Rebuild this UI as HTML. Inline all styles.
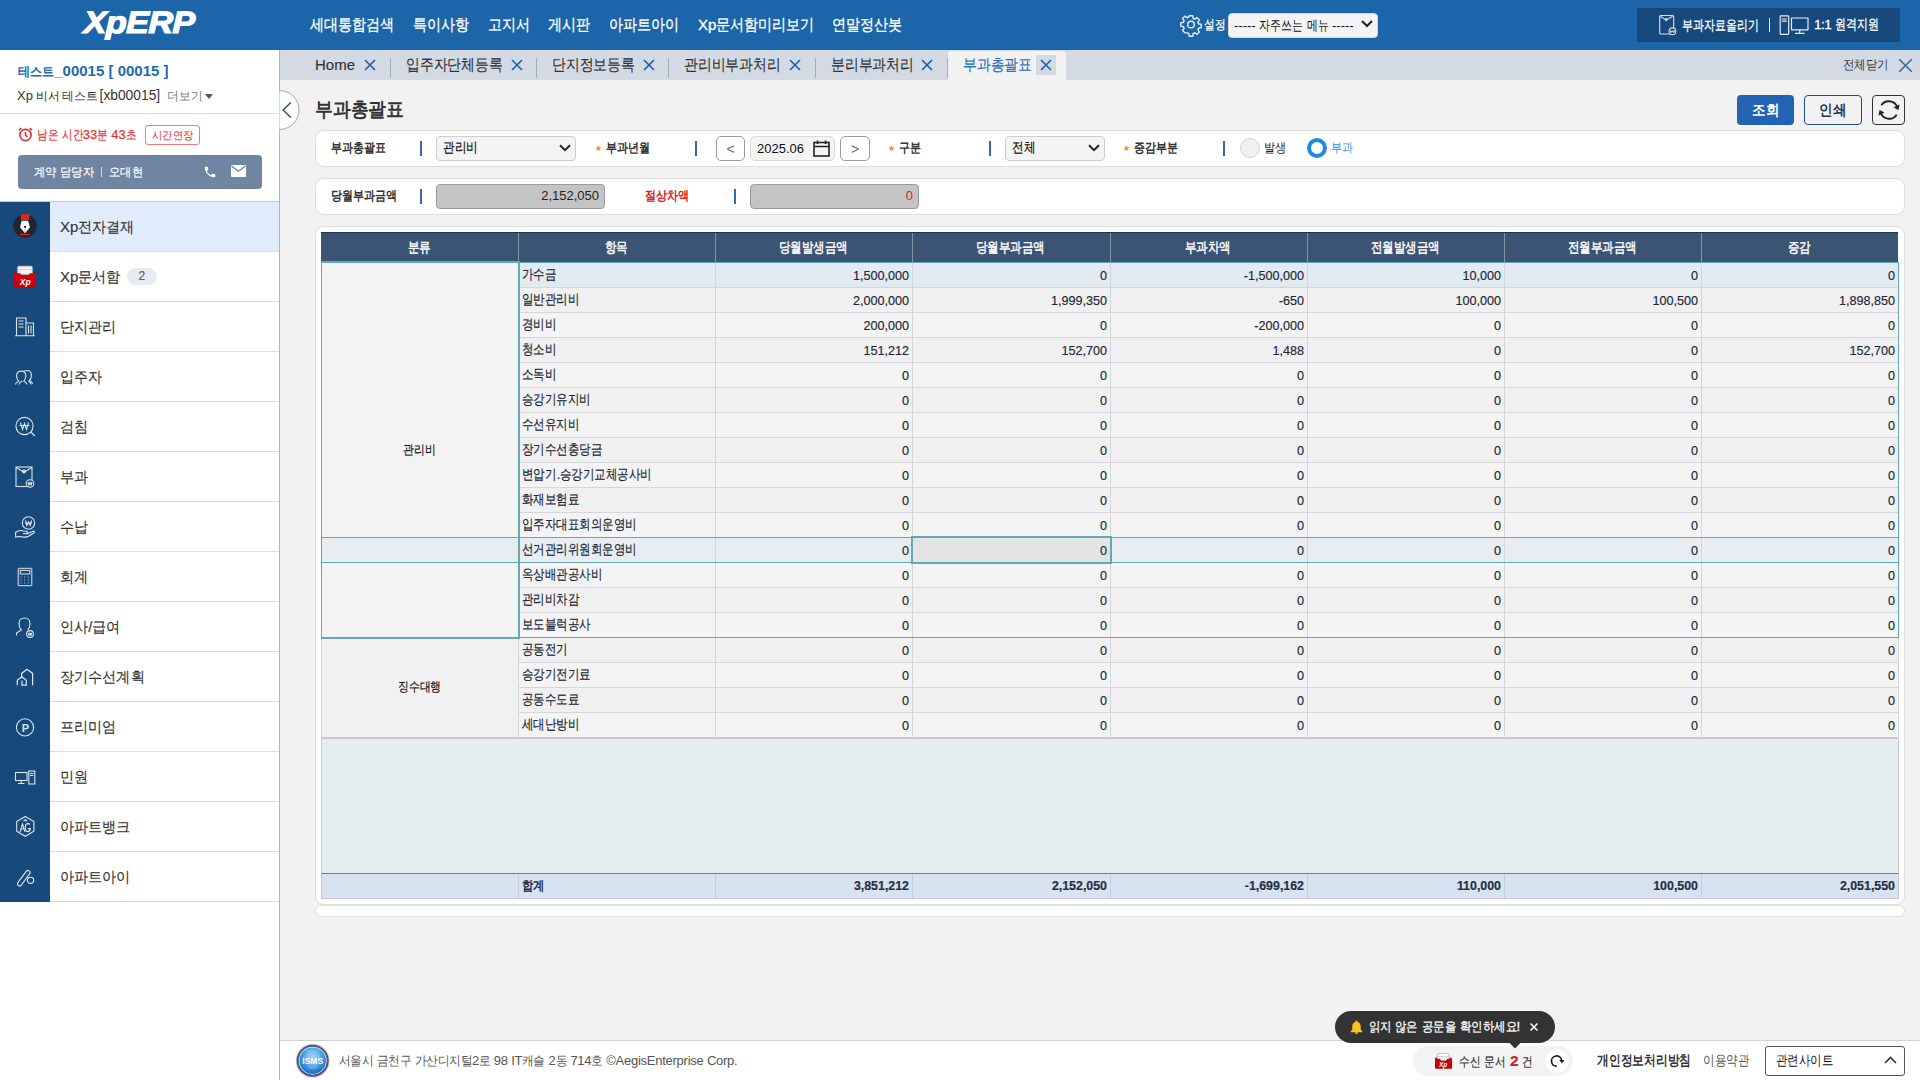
<!DOCTYPE html><html><head><meta charset="utf-8"><title>XpERP</title><style>
*{box-sizing:border-box;margin:0;padding:0}
html,body{width:1920px;height:1080px;overflow:hidden}
body{font-family:"Liberation Sans",sans-serif;background:#f2f2f2;position:relative;color:#333}
i{font-style:normal}
i.k{display:inline-block;font-size:calc(var(--kf,1) * 1em);transform:scaleX(var(--s,0.88));transform-origin:0 0;margin-right:calc(var(--n) * (var(--s,0.88) - 1) * 1em)}
.a{position:absolute;white-space:nowrap}
svg{position:absolute;overflow:visible}
#hdr{position:absolute;left:0;top:0;width:1920px;height:50px;background:#1d65a9}
.nav{position:absolute;top:15px;font-size:15px;color:#fff;-webkit-text-stroke:0.3px #fff;white-space:nowrap;line-height:20px;--kf:1.044;--s:0.878}
#side{position:absolute;left:0;top:50px;width:280px;height:1030px;background:#fff;border-right:1px solid #b4b4b4}
#tabs{position:absolute;left:280px;top:50px;width:1640px;height:30px;background:#d3dae3}
.tab{position:absolute;top:55px;height:20px;line-height:20px;font-size:15px;color:#333;-webkit-text-stroke:0.15px currentColor;white-space:nowrap;--kf:1.05;--s:0.864}
.tsep{position:absolute;top:58px;width:1px;height:20px;background:#a7adb5}
.panel{position:absolute;background:#fff;border:1px solid #dedede;border-radius:9px}
.lbl{position:absolute;font-size:13px;font-weight:bold;color:#333;white-space:nowrap;line-height:16px;--kf:1.026;--s:0.847}
.bsep{position:absolute;width:2px;height:15px;background:#2b6cb3}
.star{position:absolute;color:#f0862a;font-size:13px;font-weight:bold;line-height:16px}
.sel{position:absolute;background:#f4f4f4;border:1px solid #cdcdcd;border-radius:4px;font-size:13px;color:#111;-webkit-text-stroke:0.2px #111;line-height:22px;padding-left:6px;--kf:1.04;--s:0.83}
.ro{position:absolute;background:#c4c4c4;border:1px solid #9a9a9a;border-radius:4px;font-size:13px;color:#222;text-align:right;line-height:22px;padding-right:5px}
.mi{position:absolute;left:50px;width:229px;height:50px;border-bottom:1px solid #dcdcdc;font-size:15px;line-height:49px;padding-left:10px;color:#333;-webkit-text-stroke:0.15px #333;--kf:1.02;--s:0.94}
.row{position:absolute;left:321px;width:1577px;height:25px;border-bottom:1px solid #d4d6db}
.vl{position:absolute;width:1px;background:#d4d6db}
.c{position:absolute;font-size:12.6px;line-height:25px;padding-top:2px;color:#1c2636;-webkit-text-stroke:0.15px #1c2636;white-space:nowrap}
.it{position:absolute;left:522px;font-size:13px;line-height:25px;color:#1c2636;-webkit-text-stroke:0.2px #1c2636;white-space:nowrap;--kf:1.05;--s:0.82}
.th{position:absolute;top:233px;height:30px;line-height:30px;font-size:13px;color:#fff;-webkit-text-stroke:0.45px #fff;text-align:center;--kf:1.04;--s:0.82}
</style></head><body>
<div id="hdr"></div>
<div class="a" style="left:84px;top:5px;font:italic bold 31px/36px 'Liberation Sans',sans-serif;color:#fff;letter-spacing:-0.5px;-webkit-text-stroke:1.2px #fff;transform-origin:0 0;transform:scaleX(1.1) skewX(-1deg)">XpERP</div>
<div class="nav" style="left:310px"><i class="k" style="--n:6">세대통합검색</i></div>
<div class="nav" style="left:413px"><i class="k" style="--n:4">특이사항</i></div>
<div class="nav" style="left:488px"><i class="k" style="--n:3">고지서</i></div>
<div class="nav" style="left:548px"><i class="k" style="--n:3">게시판</i></div>
<div class="nav" style="left:609px"><i class="k" style="--n:5">아파트아이</i></div>
<div class="nav" style="left:698px">Xp<i class="k" style="--n:7">문서함미리보기</i></div>
<div class="nav" style="left:832px"><i class="k" style="--n:5">연말정산봇</i></div>
<svg style="left:1180px;top:14px" width="22" height="22" viewBox="0 0 22 22"><g fill="none" stroke="#e6edf5" stroke-width="1.4"><path d="M9.3 1.8h3.4l.5 2.6 1.6.7 2.2-1.5 2.4 2.4-1.5 2.2.7 1.6 2.6.5v3.4l-2.6.5-.7 1.6 1.5 2.2-2.4 2.4-2.2-1.5-1.6.7-.5 2.6H9.3l-.5-2.6-1.6-.7L5 18.9l-2.4-2.4 1.5-2.2-.7-1.6L.8 12.2V8.8l2.6-.5.7-1.6L2.6 4.5 5 2.1l2.2 1.5 1.6-.7z"/><circle cx="11" cy="10.5" r="3.3"/></g></svg>
<div class="a" style="left:1204px;top:15px;font-size:13.5px;color:#fff;line-height:20px;-webkit-text-stroke:0.3px #fff;--kf:0.99;--s:0.82"><i class="k" style="--n:2">설정</i></div>
<div class="a" style="left:1228px;top:13px;width:150px;height:25px;background:#f4f4f4;border-radius:4px;border:1px solid #d8d8d8"></div>
<div class="a" style="left:1234px;top:15px;font-size:13px;color:#111;line-height:20px;--kf:1.08;--s:0.78">----- <i class="k" style="--n:4">자주쓰는</i> <i class="k" style="--n:2">메뉴</i> -----</div>
<svg style="left:1361px;top:20px" width="12" height="8" viewBox="0 0 12 8"><path d="M1 1l5 5 5-5" fill="none" stroke="#222" stroke-width="2"/></svg>
<div class="a" style="left:1637px;top:8px;width:263px;height:34px;background:#17497c"></div>
<svg style="left:1659px;top:14px" width="20" height="22" viewBox="0 0 20 22"><g fill="none" stroke="#d5dee8" stroke-width="1.1"><rect x="0.7" y="1.5" width="14" height="18.5" rx="1"/><path d="M1.2 2.2l4.8 3.2 1.2-.9 1.2.9 5.2-3.2M6 5.4l1.2 1.3 1.2-1.3"/><circle cx="13.4" cy="17.3" r="3.4" fill="#17497c"/><path d="M11.2 16.2l.9 2.5 1.3-1.9 1.3 1.9.9-2.5M11 17.3h4.8" stroke-width="0.9"/></g></svg>
<div class="a" style="left:1682px;top:15px;font-size:13.5px;color:#fff;line-height:20px;-webkit-text-stroke:0.3px #fff;--kf:1.05;--s:0.78"><i class="k" style="--n:7">부과자료올리기</i></div>
<div class="a" style="left:1769px;top:18px;width:1px;height:14px;background:#e8eef5"></div>
<svg style="left:1779px;top:15px" width="30" height="20" viewBox="0 0 30 20"><g fill="none" stroke="#e8eef5" stroke-width="1.2"><rect x="1.2" y="0.8" width="8.5" height="18.5" rx="0.8"/><path d="M2.8 4h5M2.8 6.2h5"/><rect x="12.5" y="3" width="16.5" height="11.8" rx="0.3"/><path d="M20.7 14.8v3.2M16 18.4h9.5"/></g></svg>
<div class="a" style="left:1814px;top:15px;font-size:13.5px;color:#fff;line-height:20px;-webkit-text-stroke:0.3px #fff;--kf:1.01;--s:0.78"><span style="letter-spacing:-0.5px">1:1</span> <i class="k" style="--n:4">원격지원</i></div>
<div id="side"></div>
<div class="a" style="left:18px;top:62px;font-size:15px;font-weight:bold;color:#1f69b1;line-height:18px;--kf:0.874;--s:0.93"><i class="k" style="--n:3">테스트</i>_00015 [ 00015 ]</div>
<div class="a" style="left:17px;top:87px;font-size:13px;color:#333;line-height:17px;word-spacing:-1px;--kf:0.95;--s:0.98">Xp <i class="k" style="--n:2">비서</i> <i class="k" style="--n:3">테스트</i> <span style="font-size:13.8px">[xb00015]</span> <span style="color:#777;margin-left:4px"><i class="k" style="--n:3">더보기</i></span></div>
<svg style="left:205px;top:94px" width="8" height="5" viewBox="0 0 8 5"><path d="M0 0h8L4 5z" fill="#555"/></svg>
<div class="a" style="left:0;top:113px;width:279px;height:1px;background:#dedede"></div>
<svg style="left:18px;top:127px" width="15" height="15" viewBox="0 0 15 15"><g fill="none" stroke="#e52b2b" stroke-width="1.6"><circle cx="7.5" cy="8" r="5.6"/><path d="M7.5 5v3.2l2 1.6M1 3.2l2.3-2M14 3.2l-2.3-2"/></g></svg>
<div class="a" style="left:37px;top:126px;font-size:13px;color:#e52b2b;line-height:18px;-webkit-text-stroke:0.15px #e52b2b;--kf:1.01;--s:0.81"><i class="k" style="--n:2">남은</i> <i class="k" style="--n:2">시간</i>33<i class="k" style="--n:1">분</i> 43<i class="k" style="--n:1">초</i></div>
<div class="a" style="left:145px;top:125px;width:55px;height:20px;border:1px solid #ef7a7a;border-radius:3px;background:#fff"></div>
<div class="a" style="left:152px;top:126px;font-size:12px;color:#e52b2b;line-height:18px;--kf:0.9;--s:0.94"><i class="k" style="--n:4">시간연장</i></div>
<div class="a" style="left:18px;top:155px;width:244px;height:34px;background:#6f85a1;border-radius:4px"></div>
<div class="a" style="left:34px;top:163px;font-size:13px;color:#fff;line-height:18px;-webkit-text-stroke:0.2px #fff;--kf:0.95;--s:0.94"><i class="k" style="--n:2">계약</i> <i class="k" style="--n:3">담당자</i><span style="display:inline-block;width:1px;height:10px;background:#c9d3df;margin:0 7px 0 7px;vertical-align:-1px"></span><i class="k" style="--n:3">오대현</i></div>
<svg style="left:203px;top:165px" width="14" height="14" viewBox="0 0 24 24"><path fill="#fff" d="M6.6 10.8c1.4 2.8 3.8 5.1 6.6 6.6l2.2-2.2c.3-.3.7-.4 1-.2 1.1.4 2.3.6 3.6.6.6 0 1 .4 1 1V20c0 .6-.4 1-1 1C10.6 21 3 13.4 3 4c0-.6.4-1 1-1h3.5c.6 0 1 .4 1 1 0 1.3.2 2.5.6 3.6.1.3 0 .7-.2 1z"/></svg>
<svg style="left:231px;top:165px" width="15" height="12" viewBox="0 0 15 12"><rect width="15" height="12" rx="1" fill="#fff"/><path d="M0.5 1l7 5.2 7-5.2" fill="none" stroke="#6f85a1" stroke-width="1.3"/></svg>
<div class="a" style="left:0;top:201px;width:279px;height:1px;background:#c8c8c8"></div>
<div class="a" style="left:0;top:202px;width:50px;height:700px;background:#17497c"></div>
<div class="mi" style="top:202px;height:50px;background:#e1ecfc;">Xp<i class="k" style="--n:4">전자결재</i></div>
<div class="mi" style="top:252px;height:50px;">Xp<i class="k" style="--n:3">문서함</i><span style="display:inline-block;margin-left:6.5px;width:29.5px;height:17px;border-radius:9px;background:#e8ecf2;color:#5a6477;font-size:12px;line-height:17px;text-align:center;vertical-align:2px;letter-spacing:0">2</span></div>
<div class="mi" style="top:302px;height:50px;"><i class="k" style="--n:4">단지관리</i></div>
<div class="mi" style="top:352px;height:50px;"><i class="k" style="--n:3">입주자</i></div>
<div class="mi" style="top:402px;height:50px;"><i class="k" style="--n:2">검침</i></div>
<div class="mi" style="top:452px;height:50px;"><i class="k" style="--n:2">부과</i></div>
<div class="mi" style="top:502px;height:50px;"><i class="k" style="--n:2">수납</i></div>
<div class="mi" style="top:552px;height:50px;"><i class="k" style="--n:2">회계</i></div>
<div class="mi" style="top:602px;height:50px;"><i class="k" style="--n:2">인사</i>/<i class="k" style="--n:2">급여</i></div>
<div class="mi" style="top:652px;height:50px;"><i class="k" style="--n:6">장기수선계획</i></div>
<div class="mi" style="top:702px;height:50px;"><i class="k" style="--n:4">프리미엄</i></div>
<div class="mi" style="top:752px;height:50px;"><i class="k" style="--n:2">민원</i></div>
<div class="mi" style="top:802px;height:50px;"><i class="k" style="--n:5">아파트뱅크</i></div>
<div class="mi" style="top:852px;height:50px;"><i class="k" style="--n:5">아파트아이</i></div>
<svg style="left:0;top:201px" width="50" height="50" viewBox="0 0 50 50"><circle cx="25" cy="25" r="11.8" fill="#24242e"/><path d="M20.6 13.2h9l-.5 5.7h-8z" fill="#e3261f"/><path d="M21.7 19.7h6.3L30 26.2 25 32.3l-5-6.1z" fill="#fff"/><circle cx="25" cy="25.8" r="1.1" fill="#111"/><path d="M25 27.3v4.5" stroke="#b5b5b5" stroke-width="1"/><rect x="20" y="32.9" width="10" height="1.2" fill="#e3261f"/></svg>
<svg style="left:0;top:251px" width="50" height="50" viewBox="0 0 50 50"><defs><linearGradient id="rg2" x1="0" y1="0" x2="0" y2="1"><stop offset="0" stop-color="#e3000f"/><stop offset="1" stop-color="#bd000d"/></linearGradient></defs><rect x="17.8" y="15.3" width="14.4" height="8" rx="1" fill="#f2f2f2" stroke="#cfcfcf" stroke-width="0.9"/><path d="M17.8 18.5h14.4" stroke="#d0d0d0" stroke-width="0.9"/><path d="M14 22.2l1.4-1.8 1.5 1.8h3.2l1.9 2.5h6l1.9-2.5h3.2l1.5-1.8 1.4 1.8v13.4a1.4 1.4 0 0 1-1.4 1.4H15.4a1.4 1.4 0 0 1-1.4-1.4z" fill="url(#rg2)"/><path d="M15.4 20.4v2M34.6 20.4v2" stroke="#222" stroke-width="0.8"/><text x="25.3" y="33.6" font-family="Liberation Sans" font-style="italic" font-weight="bold" font-size="8.5" fill="#fff" text-anchor="middle">Xp</text></svg>
<svg style="left:0;top:301px" width="50" height="50" viewBox="0 0 50 50"><g fill="none" stroke="#dfe5ec" stroke-width="1.1"><path d="M16.5 34.5V17h9.5v17.5M26 22h7.5v12.5M15 34.8h20"/><path d="M18.5 20h5M18.5 23h5M18.5 26h5M28.5 24.5v8M31 24.5v8"/></g></svg>
<svg style="left:0;top:351px" width="50" height="50" viewBox="0 0 50 50"><g fill="none" stroke="#dfe5ec" stroke-width="1.1"><path d="M15.5 33.5c0-2 1.5-2.6 3.2-3.4-1.4-1.2-2.1-3-2.1-5 0-3 2-5 4.6-5s4.6 2 4.6 5c0 2-.7 3.8-2.1 5 1.7.8 3.2 1.4 3.2 3.4"/><path d="M19 33.5c0-2 1.5-2.6 3.2-3.4"/><path d="M24 20.4c.8-.6 1.8-.9 2.8-.9 2.6 0 4.6 2 4.6 5 0 2-.7 3.8-2.1 5 1.7.8 3.2 1.4 3.2 3.4"/><path d="M31 33.5c0-2-1.2-2.6-2.5-3.2"/></g></svg>
<svg style="left:0;top:401px" width="50" height="50" viewBox="0 0 50 50"><g fill="none" stroke="#dfe5ec" stroke-width="1.1"><circle cx="24.5" cy="25" r="8.6"/><path d="M30.8 31l4 4"/><path d="M20.5 21.5l2 7 2-6 2 6 2-7M19.5 24.5h10"/></g></svg>
<svg style="left:0;top:451px" width="50" height="50" viewBox="0 0 50 50"><g fill="none" stroke="#dfe5ec" stroke-width="1.1"><rect x="16" y="16" width="16" height="19.5"/><path d="M16 16.5l8 4.5 8-4.5"/><circle cx="24" cy="20.5" r="1.4"/><circle cx="30" cy="32.5" r="3.8" fill="#17497c"/><path d="M28 31l.9 3 1.1-2.4 1.1 2.4.9-3"/></g></svg>
<svg style="left:0;top:501px" width="50" height="50" viewBox="0 0 50 50"><g fill="none" stroke="#dfe5ec" stroke-width="1.1"><circle cx="28.5" cy="22" r="6.2"/><path d="M25.5 19.5l1.3 5 1.7-3.5 1.7 3.5 1.3-5M25 22h7"/><path d="M15.5 31.5c2-1.5 5-2.5 8-1.5l3.5.5c1 .2 1 1.5 0 1.7l-4 .3 4.5.3 5.5-2.5c1.2-.5 2 .8 1 1.5l-5.5 3.5c-1.5.8-3 1-4.5.8l-5-.6-3.3.6z"/></g></svg>
<svg style="left:0;top:551px" width="50" height="50" viewBox="0 0 50 50"><g fill="none" stroke="#dfe5ec" stroke-width="1"><rect x="18.2" y="17.3" width="13.6" height="17.4" rx="0.4"/><rect x="20.2" y="19.4" width="9.6" height="3.6"/></g><rect x="20.4" y="25.6" width="1.1" height="0.9" fill="#dfe5ec" opacity="0.8"/><rect x="20.4" y="28.6" width="1.1" height="0.9" fill="#dfe5ec" opacity="0.8"/><rect x="20.4" y="31.6" width="1.1" height="0.9" fill="#dfe5ec" opacity="0.8"/><rect x="24.099999999999998" y="25.6" width="1.1" height="0.9" fill="#dfe5ec" opacity="0.8"/><rect x="24.099999999999998" y="28.6" width="1.1" height="0.9" fill="#dfe5ec" opacity="0.8"/><rect x="24.099999999999998" y="31.6" width="1.1" height="0.9" fill="#dfe5ec" opacity="0.8"/><rect x="27.799999999999997" y="25.6" width="1.1" height="0.9" fill="#dfe5ec" opacity="0.8"/><rect x="27.799999999999997" y="28.6" width="1.1" height="0.9" fill="#dfe5ec" opacity="0.8"/><rect x="27.799999999999997" y="31.6" width="1.1" height="0.9" fill="#dfe5ec" opacity="0.8"/></svg>
<svg style="left:0;top:601px" width="50" height="50" viewBox="0 0 50 50"><g fill="none" stroke="#dfe5ec" stroke-width="1.1"><path d="M16.5 34.5v-2.5l4.8-3c-1.5-1.5-2.3-3.5-2.3-6.5 0-3.5 2.5-5.5 5.5-5.5s5.5 2 5.5 5.5c0 3-.7 5-2.2 6.5"/><circle cx="30" cy="33" r="3.4"/><path d="M28.2 31.8l.8 2.5 1-2 1 2 .8-2.5"/></g></svg>
<svg style="left:0;top:651px" width="50" height="50" viewBox="0 0 50 50"><g fill="none" stroke="#dfe5ec" stroke-width="1.2"><path d="M21.6 27.3V22.4l5.4-4.1 5.6 4.1v11.8"/><path d="M17.3 34.2v-5l4.5-3.4 4.5 3.4v5H22v-4.6"/></g></svg>
<svg style="left:0;top:701px" width="50" height="50" viewBox="0 0 50 50"><g fill="none" stroke="#dfe5ec" stroke-width="1.1"><circle cx="25" cy="26.4" r="8.6"/></g><text x="25.3" y="30.6" font-family="Liberation Sans" font-weight="bold" font-size="11" fill="#dfe5ec" text-anchor="middle">P</text></svg>
<svg style="left:0;top:751px" width="50" height="50" viewBox="0 0 50 50"><g fill="none" stroke="#dfe5ec" stroke-width="1.1"><rect x="15.5" y="21.5" width="11.5" height="8"/><path d="M21.2 29.5v2.5M18 32.5h6.5"/><rect x="28.8" y="20" width="6" height="13"/><path d="M30 22.5h3.5M30 24.5h3.5"/></g></svg>
<svg style="left:0;top:801px" width="50" height="50" viewBox="0 0 50 50"><g fill="none" stroke="#dfe5ec" stroke-width="1.1"><path d="M25.3 15.5l8.6 5v9.8l-8.6 5-8.6-5v-9.8z"/><path d="M20 31l2.5-8 2.5 8M21 28h3M30 23.5c-.6-.6-1.3-.9-2.1-.9-1.6 0-2.6 1.6-2.6 4s1 4 2.6 4c1.4 0 2.4-1.2 2.4-3h-2.4M23.5 20.2l1.8-1.4 1.8 1.4"/></g></svg>
<svg style="left:0;top:851px" width="50" height="50" viewBox="0 0 50 50"><g fill="none" stroke="#dfe5ec" stroke-width="1.1"><path d="M17.9 31.6l8.3-11.3a2.1 2.1 0 0 1 3.4 2.5L21.3 34.1a2.1 2.1 0 0 1-3.4-2.5z"/><circle cx="30.6" cy="29.3" r="3.1"/></g></svg>
<div id="tabs"></div>
<div class="a" style="left:948px;top:51px;width:118px;height:29px;background:#f2f2f2;border-radius:3px 3px 0 0"></div>
<div class="tab" style="left:315px">Home</div>
<svg style="left:364px;top:59px" width="12" height="12" viewBox="0 0 12 12"><path d="M1 1l10 10M11 1L1 11" stroke="#1a5fa8" stroke-width="1.6" fill="none"/></svg>
<div class="tsep" style="left:390px"></div>
<div class="tab" style="left:406px"><i class="k" style="--n:7">입주자단체등록</i></div>
<svg style="left:511px;top:59px" width="12" height="12" viewBox="0 0 12 12"><path d="M1 1l10 10M11 1L1 11" stroke="#1a5fa8" stroke-width="1.6" fill="none"/></svg>
<div class="tsep" style="left:536px"></div>
<div class="tab" style="left:552px"><i class="k" style="--n:6">단지정보등록</i></div>
<svg style="left:643px;top:59px" width="12" height="12" viewBox="0 0 12 12"><path d="M1 1l10 10M11 1L1 11" stroke="#1a5fa8" stroke-width="1.6" fill="none"/></svg>
<div class="tsep" style="left:668px"></div>
<div class="tab" style="left:684px"><i class="k" style="--n:7">관리비부과처리</i></div>
<svg style="left:789px;top:59px" width="12" height="12" viewBox="0 0 12 12"><path d="M1 1l10 10M11 1L1 11" stroke="#1a5fa8" stroke-width="1.6" fill="none"/></svg>
<div class="tsep" style="left:815px"></div>
<div class="tab" style="left:831px"><i class="k" style="--n:6">분리부과처리</i></div>
<svg style="left:921px;top:59px" width="12" height="12" viewBox="0 0 12 12"><path d="M1 1l10 10M11 1L1 11" stroke="#1a5fa8" stroke-width="1.6" fill="none"/></svg>
<div class="tsep" style="left:947px"></div>
<div class="tab" style="left:963px;color:#2a6db2"><i class="k" style="--n:5">부과총괄표</i></div>
<div class="a" style="left:1036px;top:55px;width:20px;height:20px;background:#d3dae3"></div>
<svg style="left:1040px;top:59px" width="12" height="12" viewBox="0 0 12 12"><path d="M1 1l10 10M11 1L1 11" stroke="#1a5fa8" stroke-width="1.6" fill="none"/></svg>
<div class="a" style="left:1843px;top:56px;font-size:13px;color:#333;line-height:18px;--kf:1.026;--s:0.88"><i class="k" style="--n:4">전체닫기</i></div>
<svg style="left:1898px;top:58px" width="15" height="15" viewBox="0 0 12 12"><path d="M1 1l10 10M11 1L1 11" stroke="#3d6a99" stroke-width="1.3" fill="none"/></svg>
<svg style="left:279px;top:90px" width="21" height="40" viewBox="0 0 21 40"><path d="M0.5 0.5a19.5 19.5 0 0 1 0 39" fill="#fff" stroke="#a8a8a8" stroke-width="1"/><path d="M11.8 12.5L4.2 20l7.6 7.5" fill="none" stroke="#24578a" stroke-width="1.5"/></svg>
<div class="a" style="left:315px;top:97px;font-size:20px;font-weight:bold;color:#333;line-height:24px;--kf:0.978;--s:0.89"><i class="k" style="--n:5">부과총괄표</i></div>
<div class="a" style="left:1737px;top:95px;width:57px;height:30px;background:#2462b3;border-radius:4px;color:#fff;font-size:15px;font-weight:bold;text-align:center;line-height:30px;--kf:0.978;--s:0.9"><i class="k" style="--n:2">조회</i></div>
<div class="a" style="left:1804px;top:95px;width:58px;height:30px;background:#f2f2f2;border:1px solid #1e4e80;border-radius:4px;color:#1b3556;font-size:15px;font-weight:bold;text-align:center;line-height:28px;--kf:0.978;--s:0.9"><i class="k" style="--n:2">인쇄</i></div>
<div class="a" style="left:1872px;top:95px;width:33px;height:30px;background:#f2f2f2;border:1px solid #333;border-radius:4px"></div>
<svg style="left:1877px;top:99px" width="24" height="22" viewBox="0 0 24 22"><g fill="none" stroke="#222" stroke-width="1.8"><path d="M20.5 9A9 9 0 0 0 4.3 6.3"/><path d="M3.5 13A9 9 0 0 0 19.7 15.7"/></g><path d="M22.5 5.5l-1 5.5-5-2.5z" fill="#222"/><path d="M1.5 16.5l1-5.5 5 2.5z" fill="#222"/></svg>
<div class="panel" style="left:315px;top:130px;width:1590px;height:37px"></div>
<div class="panel" style="left:315px;top:178px;width:1590px;height:37px"></div>
<div class="panel" style="left:315px;top:226px;width:1590px;height:679px"></div>
<div class="panel" style="left:315px;top:905px;width:1590px;height:12px;border-radius:6px"></div>
<div class="lbl" style="left:331px;top:140px"><i class="k" style="--n:5">부과총괄표</i></div>
<div class="bsep" style="left:420px;top:141px"></div>
<div class="sel" style="left:436px;top:136px;width:140px;height:25px"><i class="k" style="--n:3">관리비</i></div>
<svg style="left:559px;top:144px" width="12" height="8" viewBox="0 0 12 8"><path d="M1 1.2l5 5 5-5" fill="none" stroke="#222" stroke-width="2"/></svg>
<div class="star" style="left:596px;top:143px">*</div>
<div class="lbl" style="left:606px;top:140px"><i class="k" style="--n:4">부과년월</i></div>
<div class="bsep" style="left:695px;top:141px"></div>
<div class="a" style="left:716px;top:136px;width:29px;height:25px;background:#fff;border:1px solid #9c9c9c;border-radius:5px;font-size:14px;color:#6b6b6b;text-align:center;line-height:25px">&lt;</div>
<div class="a" style="left:750px;top:136px;width:85px;height:25px;background:#f4f4f4;border:1px solid #dadada;border-radius:5px;font-size:13px;color:#111;line-height:23px;padding-left:6px">2025.06</div>
<svg style="left:813px;top:140px" width="17" height="17" viewBox="0 0 17 17"><g fill="none" stroke="#222" stroke-width="1.6"><rect x="1" y="2.5" width="15" height="13.5"/><path d="M1 6.5h15M4.5 0.5v3.5M12.5 0.5v3.5"/></g></svg>
<div class="a" style="left:840px;top:136px;width:30px;height:25px;background:#fff;border:1px solid #9c9c9c;border-radius:5px;font-size:14px;color:#6b6b6b;text-align:center;line-height:25px">&gt;</div>
<div class="star" style="left:889px;top:143px">*</div>
<div class="lbl" style="left:899px;top:140px"><i class="k" style="--n:2">구분</i></div>
<div class="bsep" style="left:989px;top:141px"></div>
<div class="sel" style="left:1005px;top:136px;width:100px;height:25px"><i class="k" style="--n:2">전체</i></div>
<svg style="left:1088px;top:144px" width="12" height="8" viewBox="0 0 12 8"><path d="M1 1.2l5 5 5-5" fill="none" stroke="#222" stroke-width="2"/></svg>
<div class="star" style="left:1124px;top:143px">*</div>
<div class="lbl" style="left:1134px;top:140px"><i class="k" style="--n:4">증감부분</i></div>
<div class="bsep" style="left:1223px;top:141px"></div>
<div class="a" style="left:1240px;top:138px;width:20px;height:20px;border-radius:50%;background:#f0f0f0;border:1px solid #d6d6d6"></div>
<div class="a" style="left:1264px;top:140px;font-size:13px;color:#222;line-height:16px;--kf:1.026;--s:0.855"><i class="k" style="--n:2">발생</i></div>
<div class="a" style="left:1307px;top:138px;width:20px;height:20px;border-radius:50%;background:#fff;border:4px solid #1e88e5"></div>
<div class="a" style="left:1331px;top:140px;font-size:13px;color:#3b8fe0;line-height:16px;--kf:1.026;--s:0.855"><i class="k" style="--n:2">부과</i></div>
<div class="lbl" style="left:331px;top:188px"><i class="k" style="--n:6">당월부과금액</i></div>
<div class="bsep" style="left:420px;top:189px"></div>
<div class="ro" style="left:436px;top:184px;width:169px;height:25px">2,152,050</div>
<div class="lbl" style="left:645px;top:188px;color:#e02020"><i class="k" style="--n:4">절상차액</i></div>
<div class="bsep" style="left:734px;top:189px"></div>
<div class="ro" style="left:750px;top:184px;width:169px;height:25px;color:#e02020">0</div>
<div class="a" style="left:321px;top:232px;width:1577px;height:30px;background:#3c5474;border-top:1px solid #1d3450"></div>
<div class="th" style="left:321px;width:197px"><i class="k" style="--n:2">분류</i></div>
<div class="th" style="left:518px;width:197px"><i class="k" style="--n:2">항목</i></div>
<div class="a" style="left:518px;top:233px;width:1px;height:29px;background:#8593a6"></div>
<div class="th" style="left:715px;width:197px"><i class="k" style="--n:6">당월발생금액</i></div>
<div class="a" style="left:715px;top:233px;width:1px;height:29px;background:#8593a6"></div>
<div class="th" style="left:912px;width:198px"><i class="k" style="--n:6">당월부과금액</i></div>
<div class="a" style="left:912px;top:233px;width:1px;height:29px;background:#8593a6"></div>
<div class="th" style="left:1110px;width:197px"><i class="k" style="--n:4">부과차액</i></div>
<div class="a" style="left:1110px;top:233px;width:1px;height:29px;background:#8593a6"></div>
<div class="th" style="left:1307px;width:197px"><i class="k" style="--n:6">전월발생금액</i></div>
<div class="a" style="left:1307px;top:233px;width:1px;height:29px;background:#8593a6"></div>
<div class="th" style="left:1504px;width:197px"><i class="k" style="--n:6">전월부과금액</i></div>
<div class="a" style="left:1504px;top:233px;width:1px;height:29px;background:#8593a6"></div>
<div class="th" style="left:1701px;width:197px"><i class="k" style="--n:2">증감</i></div>
<div class="a" style="left:1701px;top:233px;width:1px;height:29px;background:#8593a6"></div>
<div class="a" style="left:321px;top:262px;width:197px;height:376px;background:#f3f3f3"></div>
<div class="a" style="left:321px;top:638px;width:197px;height:101px;background:#f1f1f1;border-bottom:2px solid #c9c9c9"></div>
<div class="a" style="left:518px;top:263px;width:1380px;height:25px;background:#e1ebf1;border-bottom:1px solid #d4d6db;"></div>
<div class="it" style="top:262px"><i class="k" style="--n:3">가수금</i></div>
<div class="c" style="right:1011px;top:262px">1,500,000</div>
<div class="c" style="right:813px;top:262px">0</div>
<div class="c" style="right:616px;top:262px">-1,500,000</div>
<div class="c" style="right:419px;top:262px">10,000</div>
<div class="c" style="right:222px;top:262px">0</div>
<div class="c" style="right:25px;top:262px">0</div>
<div class="a" style="left:518px;top:288px;width:1380px;height:25px;background:#f0f0f0;border-bottom:1px solid #d4d6db;"></div>
<div class="it" style="top:287px"><i class="k" style="--n:5">일반관리비</i></div>
<div class="c" style="right:1011px;top:287px">2,000,000</div>
<div class="c" style="right:813px;top:287px">1,999,350</div>
<div class="c" style="right:616px;top:287px">-650</div>
<div class="c" style="right:419px;top:287px">100,000</div>
<div class="c" style="right:222px;top:287px">100,500</div>
<div class="c" style="right:25px;top:287px">1,898,850</div>
<div class="a" style="left:518px;top:313px;width:1380px;height:25px;background:#f4f4f4;border-bottom:1px solid #d4d6db;"></div>
<div class="it" style="top:312px"><i class="k" style="--n:3">경비비</i></div>
<div class="c" style="right:1011px;top:312px">200,000</div>
<div class="c" style="right:813px;top:312px">0</div>
<div class="c" style="right:616px;top:312px">-200,000</div>
<div class="c" style="right:419px;top:312px">0</div>
<div class="c" style="right:222px;top:312px">0</div>
<div class="c" style="right:25px;top:312px">0</div>
<div class="a" style="left:518px;top:338px;width:1380px;height:25px;background:#f0f0f0;border-bottom:1px solid #d4d6db;"></div>
<div class="it" style="top:337px"><i class="k" style="--n:3">청소비</i></div>
<div class="c" style="right:1011px;top:337px">151,212</div>
<div class="c" style="right:813px;top:337px">152,700</div>
<div class="c" style="right:616px;top:337px">1,488</div>
<div class="c" style="right:419px;top:337px">0</div>
<div class="c" style="right:222px;top:337px">0</div>
<div class="c" style="right:25px;top:337px">152,700</div>
<div class="a" style="left:518px;top:363px;width:1380px;height:25px;background:#f4f4f4;border-bottom:1px solid #d4d6db;"></div>
<div class="it" style="top:362px"><i class="k" style="--n:3">소독비</i></div>
<div class="c" style="right:1011px;top:362px">0</div>
<div class="c" style="right:813px;top:362px">0</div>
<div class="c" style="right:616px;top:362px">0</div>
<div class="c" style="right:419px;top:362px">0</div>
<div class="c" style="right:222px;top:362px">0</div>
<div class="c" style="right:25px;top:362px">0</div>
<div class="a" style="left:518px;top:388px;width:1380px;height:25px;background:#f0f0f0;border-bottom:1px solid #d4d6db;"></div>
<div class="it" style="top:387px"><i class="k" style="--n:6">승강기유지비</i></div>
<div class="c" style="right:1011px;top:387px">0</div>
<div class="c" style="right:813px;top:387px">0</div>
<div class="c" style="right:616px;top:387px">0</div>
<div class="c" style="right:419px;top:387px">0</div>
<div class="c" style="right:222px;top:387px">0</div>
<div class="c" style="right:25px;top:387px">0</div>
<div class="a" style="left:518px;top:413px;width:1380px;height:25px;background:#f4f4f4;border-bottom:1px solid #d4d6db;"></div>
<div class="it" style="top:412px"><i class="k" style="--n:5">수선유지비</i></div>
<div class="c" style="right:1011px;top:412px">0</div>
<div class="c" style="right:813px;top:412px">0</div>
<div class="c" style="right:616px;top:412px">0</div>
<div class="c" style="right:419px;top:412px">0</div>
<div class="c" style="right:222px;top:412px">0</div>
<div class="c" style="right:25px;top:412px">0</div>
<div class="a" style="left:518px;top:438px;width:1380px;height:25px;background:#f0f0f0;border-bottom:1px solid #d4d6db;"></div>
<div class="it" style="top:437px"><i class="k" style="--n:7">장기수선충당금</i></div>
<div class="c" style="right:1011px;top:437px">0</div>
<div class="c" style="right:813px;top:437px">0</div>
<div class="c" style="right:616px;top:437px">0</div>
<div class="c" style="right:419px;top:437px">0</div>
<div class="c" style="right:222px;top:437px">0</div>
<div class="c" style="right:25px;top:437px">0</div>
<div class="a" style="left:518px;top:463px;width:1380px;height:25px;background:#f4f4f4;border-bottom:1px solid #d4d6db;"></div>
<div class="it" style="top:462px"><i class="k" style="--n:3">변압기</i>.<i class="k" style="--n:8">승강기교체공사비</i></div>
<div class="c" style="right:1011px;top:462px">0</div>
<div class="c" style="right:813px;top:462px">0</div>
<div class="c" style="right:616px;top:462px">0</div>
<div class="c" style="right:419px;top:462px">0</div>
<div class="c" style="right:222px;top:462px">0</div>
<div class="c" style="right:25px;top:462px">0</div>
<div class="a" style="left:518px;top:488px;width:1380px;height:25px;background:#f0f0f0;border-bottom:1px solid #d4d6db;"></div>
<div class="it" style="top:487px"><i class="k" style="--n:5">화재보험료</i></div>
<div class="c" style="right:1011px;top:487px">0</div>
<div class="c" style="right:813px;top:487px">0</div>
<div class="c" style="right:616px;top:487px">0</div>
<div class="c" style="right:419px;top:487px">0</div>
<div class="c" style="right:222px;top:487px">0</div>
<div class="c" style="right:25px;top:487px">0</div>
<div class="a" style="left:518px;top:513px;width:1380px;height:25px;background:#f4f4f4;border-bottom:1px solid #d4d6db;"></div>
<div class="it" style="top:512px"><i class="k" style="--n:10">입주자대표회의운영비</i></div>
<div class="c" style="right:1011px;top:512px">0</div>
<div class="c" style="right:813px;top:512px">0</div>
<div class="c" style="right:616px;top:512px">0</div>
<div class="c" style="right:419px;top:512px">0</div>
<div class="c" style="right:222px;top:512px">0</div>
<div class="c" style="right:25px;top:512px">0</div>
<div class="a" style="left:518px;top:538px;width:1380px;height:25px;background:#e8edf1;border-bottom:1px solid #d4d6db;"></div>
<div class="it" style="top:537px"><i class="k" style="--n:10">선거관리위원회운영비</i></div>
<div class="c" style="right:1011px;top:537px">0</div>
<div class="c" style="right:813px;top:537px">0</div>
<div class="c" style="right:616px;top:537px">0</div>
<div class="c" style="right:419px;top:537px">0</div>
<div class="c" style="right:222px;top:537px">0</div>
<div class="c" style="right:25px;top:537px">0</div>
<div class="a" style="left:518px;top:563px;width:1380px;height:25px;background:#f4f4f4;border-bottom:1px solid #d4d6db;"></div>
<div class="it" style="top:562px"><i class="k" style="--n:7">옥상배관공사비</i></div>
<div class="c" style="right:1011px;top:562px">0</div>
<div class="c" style="right:813px;top:562px">0</div>
<div class="c" style="right:616px;top:562px">0</div>
<div class="c" style="right:419px;top:562px">0</div>
<div class="c" style="right:222px;top:562px">0</div>
<div class="c" style="right:25px;top:562px">0</div>
<div class="a" style="left:518px;top:588px;width:1380px;height:25px;background:#f0f0f0;border-bottom:1px solid #d4d6db;"></div>
<div class="it" style="top:587px"><i class="k" style="--n:5">관리비차감</i></div>
<div class="c" style="right:1011px;top:587px">0</div>
<div class="c" style="right:813px;top:587px">0</div>
<div class="c" style="right:616px;top:587px">0</div>
<div class="c" style="right:419px;top:587px">0</div>
<div class="c" style="right:222px;top:587px">0</div>
<div class="c" style="right:25px;top:587px">0</div>
<div class="a" style="left:518px;top:613px;width:1380px;height:25px;background:#f4f4f4;border-bottom:1px solid #d4d6db;"></div>
<div class="it" style="top:612px"><i class="k" style="--n:6">보도블럭공사</i></div>
<div class="c" style="right:1011px;top:612px">0</div>
<div class="c" style="right:813px;top:612px">0</div>
<div class="c" style="right:616px;top:612px">0</div>
<div class="c" style="right:419px;top:612px">0</div>
<div class="c" style="right:222px;top:612px">0</div>
<div class="c" style="right:25px;top:612px">0</div>
<div class="a" style="left:518px;top:638px;width:1380px;height:25px;background:#f0f0f0;border-bottom:1px solid #d4d6db;"></div>
<div class="it" style="top:637px"><i class="k" style="--n:4">공동전기</i></div>
<div class="c" style="right:1011px;top:637px">0</div>
<div class="c" style="right:813px;top:637px">0</div>
<div class="c" style="right:616px;top:637px">0</div>
<div class="c" style="right:419px;top:637px">0</div>
<div class="c" style="right:222px;top:637px">0</div>
<div class="c" style="right:25px;top:637px">0</div>
<div class="a" style="left:518px;top:663px;width:1380px;height:25px;background:#f4f4f4;border-bottom:1px solid #d4d6db;"></div>
<div class="it" style="top:662px"><i class="k" style="--n:6">승강기전기료</i></div>
<div class="c" style="right:1011px;top:662px">0</div>
<div class="c" style="right:813px;top:662px">0</div>
<div class="c" style="right:616px;top:662px">0</div>
<div class="c" style="right:419px;top:662px">0</div>
<div class="c" style="right:222px;top:662px">0</div>
<div class="c" style="right:25px;top:662px">0</div>
<div class="a" style="left:518px;top:688px;width:1380px;height:25px;background:#f0f0f0;border-bottom:1px solid #d4d6db;"></div>
<div class="it" style="top:687px"><i class="k" style="--n:5">공동수도료</i></div>
<div class="c" style="right:1011px;top:687px">0</div>
<div class="c" style="right:813px;top:687px">0</div>
<div class="c" style="right:616px;top:687px">0</div>
<div class="c" style="right:419px;top:687px">0</div>
<div class="c" style="right:222px;top:687px">0</div>
<div class="c" style="right:25px;top:687px">0</div>
<div class="a" style="left:518px;top:713px;width:1380px;height:25px;background:#f4f4f4;border-bottom:1px solid #d4d6db;border-bottom:2px solid #c9c9c9;height:26px;"></div>
<div class="it" style="top:712px"><i class="k" style="--n:5">세대난방비</i></div>
<div class="c" style="right:1011px;top:712px">0</div>
<div class="c" style="right:813px;top:712px">0</div>
<div class="c" style="right:616px;top:712px">0</div>
<div class="c" style="right:419px;top:712px">0</div>
<div class="c" style="right:222px;top:712px">0</div>
<div class="c" style="right:25px;top:712px">0</div>
<div class="a" style="left:321px;top:538px;width:197px;height:24px;background:#e8edf1"></div>
<div class="vl" style="left:518px;top:262px;height:476px"></div>
<div class="vl" style="left:715px;top:262px;height:476px"></div>
<div class="vl" style="left:912px;top:262px;height:476px"></div>
<div class="vl" style="left:1110px;top:262px;height:476px"></div>
<div class="vl" style="left:1307px;top:262px;height:476px"></div>
<div class="vl" style="left:1504px;top:262px;height:476px"></div>
<div class="vl" style="left:1701px;top:262px;height:476px"></div>
<div class="vl" style="left:321px;top:637px;height:101px"></div>
<div class="vl" style="left:1898px;top:262px;height:476px"></div>
<div class="a" style="left:321px;top:537px;width:1577px;height:1px;background:#62aab3"></div>
<div class="a" style="left:321px;top:562px;width:1577px;height:1px;background:#62aab3"></div>
<div class="a" style="left:518px;top:637px;width:1381px;height:1px;background:#62aab3"></div>
<div class="a" style="left:1898px;top:262px;width:1px;height:376px;background:#62aab3"></div>
<div class="a" style="left:518px;top:262px;width:1380px;height:1px;background:#62aab3"></div>
<div class="a" style="left:321px;top:261px;width:199px;height:378px;border:2px solid #62aab3;border-left-width:1px"></div>
<div class="a" style="left:911px;top:536px;width:201px;height:28px;background:#e3e3e3;border:2px solid #62aab3"></div>
<div class="c" style="right:813px;top:537px">0</div>
<div class="a" style="left:321px;top:437px;width:197px;text-align:center;font-size:13px;line-height:25px;color:#111;-webkit-text-stroke:0.2px #111;--kf:1.034;--s:0.832"><i class="k" style="--n:3">관리비</i></div>
<div class="a" style="left:321px;top:674px;width:197px;text-align:center;font-size:13px;line-height:25px;color:#111;-webkit-text-stroke:0.2px #111;--kf:1.034;--s:0.832"><i class="k" style="--n:4">징수대행</i></div>
<div class="a" style="left:321px;top:739px;width:1578px;height:134px;background:#e4eef1;border-left:1px solid #d0d4da;border-right:1px solid #c0c6cf"></div>
<div class="a" style="left:321px;top:873px;width:1578px;height:26px;background:#d7e3f1;border-top:1px solid #5b80b6;border-bottom:1px solid #c4cbd6;border-left:1px solid #c4cbd6;border-right:1px solid #c4cbd6"></div>
<div class="a" style="left:518px;top:874px;width:1px;height:24px;background:#c4cfdd"></div>
<div class="a" style="left:715px;top:874px;width:1px;height:24px;background:#c4cfdd"></div>
<div class="a" style="left:912px;top:874px;width:1px;height:24px;background:#c4cfdd"></div>
<div class="a" style="left:1110px;top:874px;width:1px;height:24px;background:#c4cfdd"></div>
<div class="a" style="left:1307px;top:874px;width:1px;height:24px;background:#c4cfdd"></div>
<div class="a" style="left:1504px;top:874px;width:1px;height:24px;background:#c4cfdd"></div>
<div class="a" style="left:1701px;top:874px;width:1px;height:24px;background:#c4cfdd"></div>
<div class="a" style="left:522px;top:874px;font-size:13px;font-weight:bold;line-height:24px;color:#1f2f45;--kf:1.026;--s:0.87"><i class="k" style="--n:2">합계</i></div>
<div class="c" style="right:1011px;top:874px;line-height:24px;padding-top:0;font-weight:bold;color:#1f2f45;font-size:12.4px">3,851,212</div>
<div class="c" style="right:813px;top:874px;line-height:24px;padding-top:0;font-weight:bold;color:#1f2f45;font-size:12.4px">2,152,050</div>
<div class="c" style="right:616px;top:874px;line-height:24px;padding-top:0;font-weight:bold;color:#1f2f45;font-size:12.4px">-1,699,162</div>
<div class="c" style="right:419px;top:874px;line-height:24px;padding-top:0;font-weight:bold;color:#1f2f45;font-size:12.4px">110,000</div>
<div class="c" style="right:222px;top:874px;line-height:24px;padding-top:0;font-weight:bold;color:#1f2f45;font-size:12.4px">100,500</div>
<div class="c" style="right:25px;top:874px;line-height:24px;padding-top:0;font-weight:bold;color:#1f2f45;font-size:12.4px">2,051,550</div>
<div class="a" style="left:280px;top:1040px;width:1640px;height:40px;background:#fff;border-top:1px solid #d2d2d2"></div>
<svg style="left:295px;top:1043px" width="36" height="36" viewBox="0 0 36 36"><defs><radialGradient id="g1" cx="50%" cy="35%" r="60%"><stop offset="0" stop-color="#d8f0ff"/><stop offset="0.55" stop-color="#4aa8ea"/><stop offset="1" stop-color="#1e74c8"/></radialGradient></defs><circle cx="17.7" cy="17.7" r="17" fill="#c9cdd6"/><circle cx="17.7" cy="17.7" r="16" fill="#4a5580"/><circle cx="17.7" cy="17.7" r="14" fill="#e6e9f0"/><circle cx="17.7" cy="17.7" r="13.2" fill="url(#g1)"/><rect x="12.5" y="9" width="10.5" height="17" rx="3" fill="#7fb4e6" opacity="0.5"/><text x="17.7" y="20.8" font-family="Liberation Sans" font-weight="bold" font-size="8.5" fill="#fff" text-anchor="middle">ISMS</text></svg>
<div class="a" style="left:339px;top:1052px;font-size:13px;color:#555;line-height:18px;letter-spacing:-0.25px;--kf:0.98;--s:0.9"><i class="k" style="--n:3">서울시</i> <i class="k" style="--n:3">금천구</i> <i class="k" style="--n:5">가산디지털</i>2<i class="k" style="--n:1">로</i> 98 IT<i class="k" style="--n:2">캐슬</i> 2<i class="k" style="--n:1">동</i> 714<i class="k" style="--n:1">호</i> &copy;AegisEnterprise Corp.</div>
<div class="a" style="left:1335px;top:1011px;width:220px;height:32px;background:#333;border-radius:16px"></div>
<svg style="left:1350px;top:1020px" width="13" height="14" viewBox="0 0 13 14"><path d="M6.5 0.5c.6 0 1 .4 1 1v.4c2 .5 3.2 2.2 3.2 4.4v3.2l1.5 1.8v.9H.8v-.9l1.5-1.8V6.3c0-2.2 1.2-3.9 3.2-4.4v-.4c0-.6.4-1 1-1zM5 12.6h3a1.5 1.5 0 0 1-3 0z" fill="#f5c518"/></svg>
<div class="a" style="left:1369px;top:1018px;font-size:13px;color:#fff;line-height:18px;-webkit-text-stroke:0.3px #fff;--kf:1.0;--s:0.876"><i class="k" style="--n:2">읽지</i> <i class="k" style="--n:2">않은</i> <i class="k" style="--n:3">공문을</i> <i class="k" style="--n:5">확인하세요</i>!</div>
<svg style="left:1530px;top:1023px" width="8" height="8" viewBox="0 0 8 8"><path d="M0.5 0.5l7 7M7.5 0.5l-7 7" stroke="#fff" stroke-width="1.5"/></svg>
<div class="a" style="left:1413px;top:1046px;width:160px;height:30px;background:#f2f3f5;border-radius:15px"></div>
<svg style="left:1508px;top:1042px" width="14" height="7" viewBox="0 0 14 7"><path d="M0.5 0h13L7 6.5z" fill="#333"/></svg>
<svg style="left:1434px;top:1052px" width="18" height="18" viewBox="0 0 18 18"><defs><linearGradient id="rg" x1="0" y1="0" x2="0" y2="1"><stop offset="0" stop-color="#e3000f"/><stop offset="1" stop-color="#b3000c"/></linearGradient></defs><rect x="3.3" y="1.4" width="11.5" height="7" rx="1" fill="#f7f7f7" stroke="#c2c2c2" stroke-width="0.9"/><path d="M3.3 4.6h11.5" stroke="#c8c8c8" stroke-width="0.8"/><path d="M1 6.8l1.1-1.5 1.2 1.5h2.5l1.5 2h4.6l1.5-2h2.5l1.2-1.5 1 1.5v8.7a1.2 1.2 0 0 1-1.2 1.2H2.2A1.2 1.2 0 0 1 1 15.5z" fill="url(#rg)"/><path d="M2.1 5.3v1.6M15.9 5.3v1.6" stroke="#333" stroke-width="0.7"/><text x="9.2" y="14.6" font-family="Liberation Sans" font-style="italic" font-weight="bold" font-size="6.5" fill="#fff" text-anchor="middle">Xp</text></svg>
<div class="a" style="left:1459px;top:1052px;font-size:14px;color:#2a2a2a;line-height:18px;-webkit-text-stroke:0.15px #2a2a2a;--kf:0.963;--s:0.82"><i class="k" style="--n:2">수신</i> <i class="k" style="--n:2">문서</i> <b style="color:#d81b25;font-size:15.5px;letter-spacing:0;margin-left:1px;margin-right:3px">2</b><i class="k" style="--n:1">건</i></div>
<div class="a" style="left:1545px;top:1049px;width:24px;height:24px;background:#fff;border-radius:50%;box-shadow:0 0 1px #ddd"></div>
<svg style="left:1550px;top:1054px" width="15" height="15" viewBox="0 0 15 15"><path d="M6.8 12.1A5.1 5.1 0 1 1 11.6 6.2" fill="none" stroke="#1a1a1a" stroke-width="1.6"/><path d="M9.2 6.1h5.2l-2.4 3.3z" fill="#1a1a1a"/></svg>
<div class="a" style="left:1597px;top:1052px;font-size:13px;font-weight:bold;color:#333;line-height:18px;--kf:1.06;--s:0.84"><i class="k" style="--n:8">개인정보처리방침</i></div>
<div class="a" style="left:1703px;top:1052px;font-size:13px;color:#555;line-height:18px;--kf:1.06;--s:0.825"><i class="k" style="--n:4">이용약관</i></div>
<div class="a" style="left:1765px;top:1046px;width:140px;height:30px;background:#fff;border:1px solid #555;border-radius:3px"></div>
<div class="a" style="left:1776px;top:1052px;font-size:13px;color:#111;line-height:18px;--kf:1.06;--s:0.82"><i class="k" style="--n:5">관련사이트</i></div>
<svg style="left:1884px;top:1056px" width="13" height="8" viewBox="0 0 13 8"><path d="M1 7l5.5-5.5L12 7" fill="none" stroke="#333" stroke-width="1.6"/></svg>
</body></html>
